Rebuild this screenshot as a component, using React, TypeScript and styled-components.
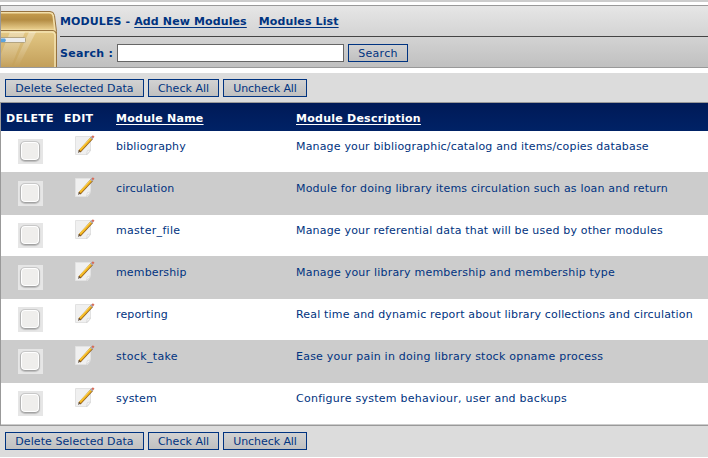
import React from 'react';
import styled, { createGlobalStyle } from 'styled-components';

const GlobalStyle = createGlobalStyle`
  body {
    margin: 0;
    background: #fff;
    color: #003380;
    font: 11px/14px "DejaVu Sans", Verdana, sans-serif;
    letter-spacing: 0.18px;
    overflow: hidden;
  }
  * { box-sizing: border-box; }
`;

const Page = styled.div`
  height: 458px;
  border-top: 2px solid #ccc;
  padding-top: 3px;
`;

const MenuBox = styled.header`
  display: flex;
  height: 63px;
  border: 1px solid #999;
  border-right: 0;
  background: linear-gradient(#e6e6e6, #c0c0c0);
`;

const FolderIcon = styled.svg`
  display: block;
  width: 59px;
  height: 61px;
  flex: none;
`;

const MenuContent = styled.div`
  flex: 1;
  font-weight: bold;
`;

const MenuTitle = styled.div`
  height: 31px;
  padding-top: 9px;
  border-bottom: 1px solid #444;
  white-space: pre;
  letter-spacing: 0.12px;
`;

const MenuLink = styled.a<{ $gap?: boolean }>`
  color: #003380;
  text-decoration: underline;
  text-underline-offset: 2px;
  margin-left: ${(p) => (p.$gap ? 12 : 0)}px;
`;

const SearchForm = styled.div`
  display: flex;
  padding-top: 7px;
`;

const SearchLabel = styled.label`
  width: 57px;
  padding-top: 3px;
  letter-spacing: 0.3px;
`;

const SearchInput = styled.input`
  width: 227px;
  height: 18px;
  margin-right: 4px;
  padding: 0 2px;
  border: 1px solid #666;
  background: #fff;
`;

const Button = styled.button<{ $w: number; $spacing?: number }>`
  width: ${(p) => p.$w}px;
  height: 18px;
  padding: 1px 0 0;
  border: 1px solid #003380;
  background: linear-gradient(#d2d2d2, #c0c0c0);
  color: #003380;
  font: 11px/14px "DejaVu Sans", Verdana, sans-serif;
  letter-spacing: ${(p) => p.$spacing ?? 0}px;
  white-space: nowrap;
`;

const ActionBar = styled.div<{ $bottom?: boolean }>`
  display: flex;
  gap: 4px;
  height: ${(p) => (p.$bottom ? 31 : 29)}px;
  padding: 6px 5px;
  margin-top: ${(p) => (p.$bottom ? 0 : 5)}px;
  background: #dcdcdc;
`;

const Grid = styled.div`
  border: 1px solid #999;
  border-right: 0;
`;

const Row = styled.div<{ $alt?: boolean }>`
  display: grid;
  grid-template-columns: 58px 57px 180px 1fr;
  height: 42px;
  background: ${(p) => (p.$alt ? '#ccc' : '#fff')};
  border-bottom: 1px solid #ccc;
`;

const HeadRow = styled(Row)`
  height: 28px;
  border: 0;
  padding-top: 9px;
  background: linear-gradient(#001a57, #002266);
  color: #fff;
  font-weight: bold;
  letter-spacing: 0.25px;
`;

const HeadCell = styled.span<{ $inset?: number }>`
  padding-left: ${(p) => p.$inset ?? 0}px;
`;

const SortLink = styled.a`
  color: #fff;
  text-decoration: underline;
  text-underline-offset: 2px;
`;

const Cell = styled.span<{ $spacing?: number }>`
  padding-top: 9px;
  white-space: nowrap;
  letter-spacing: ${(p) => p.$spacing ?? 0.15}px;
`;

const CheckCell = styled.span`
  padding: 8px 0 0 17px;
`;

const Check = styled.span`
  display: flex;
  align-items: center;
  justify-content: center;
  width: 25px;
  height: 25px;
  background: #e6e6e6;

  &::before {
    content: '';
    width: 18px;
    height: 18px;
    margin: -1px 0 0 -2px;
    border: 1px solid;
    border-color: #c8c8c8 #b5b5b5 #a2a2a2;
    border-radius: 5px;
    background: #efeeec;
    box-shadow: inset 0 0 0 1px #fff, 0 1px 1px #bbb;
  }
`;

const EditCell = styled.span`
  padding: 4px 0 0 16px;
`;

const EditIcon = styled.svg`
  display: block;
  width: 20px;
  height: 21px;
`;

const modules: [string, string, number, number][] = [
  ['bibliography', 'Manage your bibliographic/catalog and items/copies database', 0.1, 0.17],
  ['circulation', 'Module for doing library items circulation such as loan and return', 0.1, 0.18],
  ['master_file', 'Manage your referential data that will be used by other modules', 0.3, 0.18],
  ['membership', 'Manage your library membership and membership type', 0.15, 0.21],
  ['reporting', 'Real time and dynamic report about library collections and circulation', 0.15, 0.17],
  ['stock_take', 'Ease your pain in doing library stock opname process', 0.35, 0.23],
  ['system', 'Configure system behaviour, user and backups', 0.2, 0.26],
];

const Folder = () => (
  <FolderIcon viewBox="0 0 59 61">
    <defs>
      <linearGradient id="lid" x2="0" y2="1">
        <stop stopColor="#c49a4c" />
        <stop offset=".4" stopColor="#b48c43" />
        <stop offset="1" stopColor="#ead08f" />
      </linearGradient>
      <linearGradient id="front" x2="0" y2="1">
        <stop stopColor="#e4c986" />
        <stop offset="1" stopColor="#c19d58" />
      </linearGradient>
      <linearGradient id="shine" x2="0" y2="1">
        <stop stopColor="#fff" stopOpacity=".35" />
        <stop offset="1" stopColor="#fff" stopOpacity="0" />
      </linearGradient>
    </defs>
    <path d="M-3 5.5H49q4 0 4.5 4l2 16v37H-3z" fill="#f2dfaa" stroke="#96723f" />
    <path d="M-3 7.5H48q3 0 3.5 3l1.5 13H-3z" fill="url(#lid)" />
    <path d="M-3 24.5H52q3 0 3.5 4V63H-3z" fill="url(#front)" stroke="#96723f" />
    <path d="M-3 26H51q3 0 3 4V63" fill="none" stroke="#f5e3b2" strokeWidth="1.5" />
    <path d="M9 26H24L10 61H0V48z" fill="url(#shine)" />
    <path d="M28 26H35L17 61H12z" fill="url(#shine)" />
    <rect x="-3" y="31.5" width="27.5" height="5" rx="1" fill="#ececec" stroke="#b3a481" />
    <path d="M0 32.5h4l1 1.7-1 1.8H0z" fill="#5ba4de" />
  </FolderIcon>
);

const Edit = () => (
  <EditIcon viewBox="0 0 20 21">
    <path d="M.5 1.5h15v14l-3 4H.5z" fill="#f0f0f0" stroke="#e2e2e2" />
    <path d="M15.5 15l-4 4.5 1-4z" fill="#fff" stroke="#ccc" strokeWidth=".6" />
    <path d="M4.5 16.5L17 3" stroke="#8d5a18" strokeWidth="2.8" />
    <path d="M5 15.5L17 2.5" stroke="#f4b61e" strokeWidth="2" />
    <path d="M5 14.5L16 2.7" stroke="#ffe06a" strokeWidth=".7" />
    <path d="M16 3.5l1.4-1.5" stroke="#aab" strokeWidth="2.6" />
    <path d="M17.3 2.4l1.4-1.5" stroke="#d96a55" strokeWidth="2.2" />
    <path d="M3 18l.8-3 1.8 1.6z" fill="#665440" />
  </EditIcon>
);

const Actions = ({ bottom }: { bottom?: boolean }) => (
  <ActionBar $bottom={bottom}>
    <Button $w={139} $spacing={0.06}>Delete Selected Data</Button>
    <Button $w={71} $spacing={0.03}>Check All</Button>
    <Button $w={84} $spacing={-0.06}>Uncheck All</Button>
  </ActionBar>
);

export default function App() {
  return (
    <Page>
      <GlobalStyle />
      <MenuBox>
        <Folder />
        <MenuContent>
          <MenuTitle>
            MODULES - <MenuLink>Add New Modules</MenuLink>
            <MenuLink $gap>Modules List</MenuLink>
          </MenuTitle>
          <SearchForm>
            <SearchLabel htmlFor="search">Search :</SearchLabel>
            <SearchInput id="search" />
            <Button $w={60} $spacing={0.3}>Search</Button>
          </SearchForm>
        </MenuContent>
      </MenuBox>
      <Actions />
      <Grid>
        <HeadRow>
          <HeadCell $inset={5}>DELETE</HeadCell>
          <HeadCell $inset={5}>EDIT</HeadCell>
          <HeadCell><SortLink>Module Name</SortLink></HeadCell>
          <HeadCell><SortLink>Module Description</SortLink></HeadCell>
        </HeadRow>
        {modules.map(([name, description, nameSpacing, descriptionSpacing], i) => (
          <Row key={name} $alt={i % 2 === 1}>
            <CheckCell><Check role="checkbox" aria-checked="false" /></CheckCell>
            <EditCell><Edit /></EditCell>
            <Cell $spacing={nameSpacing}>{name}</Cell>
            <Cell $spacing={descriptionSpacing}>{description}</Cell>
          </Row>
        ))}
      </Grid>
      <Actions bottom />
    </Page>
  );
}
